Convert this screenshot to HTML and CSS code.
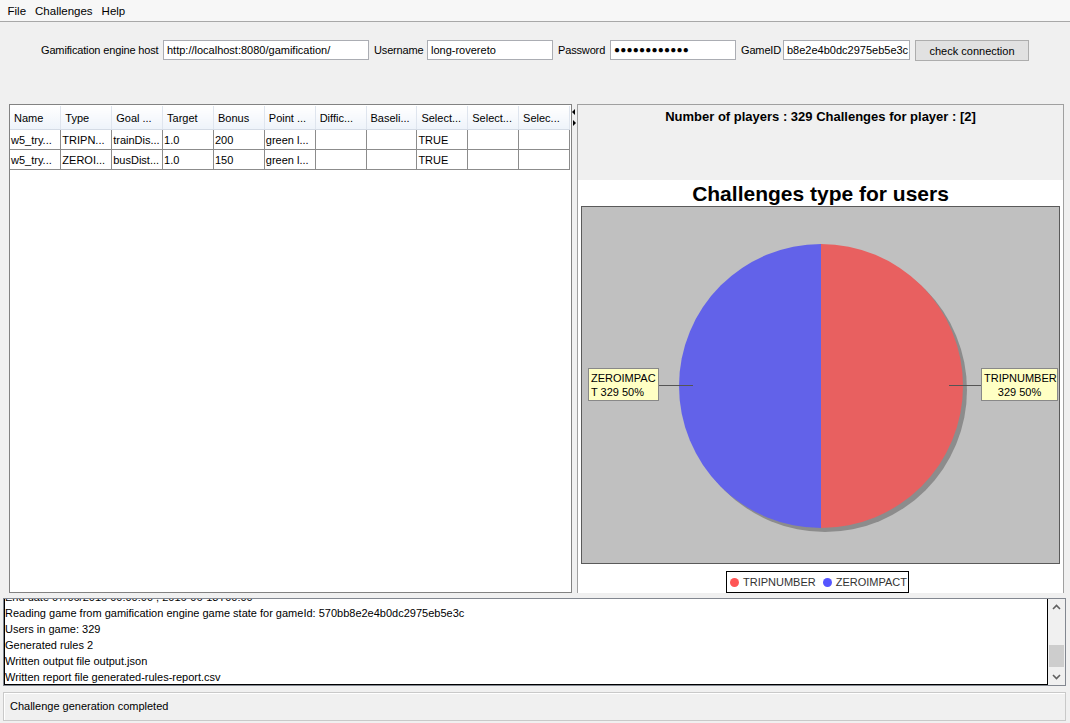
FILE: index.html
```html
<!DOCTYPE html>
<html>
<head>
<meta charset="utf-8">
<link rel="stylesheet" href="styles.css">
</head>
<body>
<div class="menubar">
  <span class="menu-item">File</span>
  <span class="menu-item">Challenges</span>
  <span class="menu-item">Help</span>
</div>

<div class="config">
  <span class="lbl lbl-host">Gamification engine host</span>
  <div class="field field-host">http://localhost:8080/gamification/</div>
  <span class="lbl lbl-user">Username</span>
  <div class="field field-sm">long-rovereto</div>
  <span class="lbl lbl-pass">Password</span>
  <div class="field field-sm field-pass">●●●●●●●●●●●●</div>
  <span class="lbl lbl-game">GameID</span>
  <div class="field field-game">b8e2e4b0dc2975eb5e3c</div>
  <button class="btn">check connection</button>
</div>

<div class="main">
  <div class="table-pane">
    <table class="grid">
      <thead>
        <tr>
          <th>Name</th><th>Type</th><th>Goal ...</th><th>Target</th><th>Bonus</th><th>Point ...</th><th>Diffic...</th><th>Baseli...</th><th>Select...</th><th>Select...</th><th>Selec...</th>
        </tr>
      </thead>
      <tbody>
        <tr>
          <td>w5_try...</td><td>TRIPN...</td><td>trainDis...</td><td>1.0</td><td>200</td><td>green l...</td><td></td><td></td><td>TRUE</td><td></td><td></td>
        </tr>
        <tr>
          <td>w5_try...</td><td>ZEROI...</td><td>busDist...</td><td>1.0</td><td>150</td><td>green l...</td><td></td><td></td><td>TRUE</td><td></td><td></td>
        </tr>
      </tbody>
    </table>
  </div>

  <div class="divider">
    <span class="arrow arrow-left"></span>
    <span class="arrow arrow-right"></span>
  </div>

  <div class="right-pane">
    <div class="stats">Number of players : 329 Challenges for player : [2]</div>
    <div class="chart">
      <div class="chart-title">Challenges type for users</div>
      <div class="plot">
        <svg class="pie" width="477" height="356" viewBox="0 0 477 356">
          <circle cx="243" cy="183" r="142" fill="#8c8c8c"/>
          <path d="M239 37 A142 142 0 0 1 239 321 Z" fill="#e86060"/>
          <path d="M239 321 A142 142 0 0 1 239 37 Z" fill="#6262e9"/>
          <line x1="77" y1="178.5" x2="111" y2="178.5" stroke="#555" stroke-width="1"/>
          <line x1="367" y1="178.5" x2="400" y2="178.5" stroke="#555" stroke-width="1"/>
        </svg>
        <div class="pie-label label-left">ZEROIMPAC<br>T 329 50%</div>
        <div class="pie-label label-right">TRIPNUMBER<br>329 50%</div>
      </div>
      <div class="legend-row">
        <div class="legend">
          <span class="dot dot-red"></span><span class="legend-text">TRIPNUMBER</span>
          <span class="dot dot-blue"></span><span class="legend-text">ZEROIMPACT</span>
        </div>
      </div>
    </div>
  </div>
</div>

<div class="log">
  <div class="log-text">
    <div class="log-lines">
      <div>End date 07/06/2016 00:00:00 , 2016-06-13T00:00</div>
      <div>Reading game from gamification engine game state for gameId: 570bb8e2e4b0dc2975eb5e3c</div>
      <div>Users in game: 329</div>
      <div>Generated rules 2</div>
      <div>Written output file output.json</div>
      <div>Written report file generated-rules-report.csv</div>
    </div>
  </div>
  <div class="scrollbar">
    <svg class="sb-arrow" width="17" height="17" viewBox="0 0 17 17"><path d="M5 10 L8.5 6.5 L12 10" fill="none" stroke="#606060" stroke-width="1.6"/></svg>
    <div class="sb-track"><div class="sb-thumb"></div></div>
    <svg class="sb-arrow" width="17" height="17" viewBox="0 0 17 17"><path d="M5 7 L8.5 10.5 L12 7" fill="none" stroke="#606060" stroke-width="1.6"/></svg>
  </div>
</div>

<div class="status">Challenge generation completed</div>
</body>
</html>
```

FILE: styles.css
```css
html, body {
  margin: 0;
  padding: 0;
}

body {
  width: 1070px;
  height: 723px;
  overflow: hidden;
  background: #f0f0f0;
  font-family: "Liberation Sans", Arial, sans-serif;
  font-size: 11px;
  color: #000;
}

/* menu */
.menubar {
  height: 21px;
  border-bottom: 1px solid #a8a8a8;
  background: #f7f7f7;
  display: flex;
  padding-left: 3px;
  font-size: 11.5px;
  line-height: 23px;
}

.menu-item {
  padding: 0 4.5px;
}

/* config */
.config {
  display: flex;
  gap: 5px;
  padding: 18px 0 0 41px;
  height: 64px;
  align-items: flex-start;
}

.lbl {
  white-space: nowrap;
  line-height: 20px;
  font-size: 11px;
  flex: 0 0 auto;
  min-width: 0;
  letter-spacing: -0.15px;
}

.lbl-host { width: 117px; }
.lbl-user { width: 48px; }
.lbl-pass { width: 47px; }
.lbl-game { width: 37px; }

.field {
  box-sizing: border-box;
  flex: 0 0 auto;
  height: 20px;
  border: 1px solid #abadb3;
  background: #fff;
  padding-left: 3px;
  line-height: 18px;
  white-space: nowrap;
  overflow: hidden;
}

.field-host { width: 206px; }
.field-sm { width: 126px; }
.field-game { width: 127px; }

.field-pass {
  font-size: 10px;
  letter-spacing: 0.2px;
}

.btn {
  box-sizing: border-box;
  flex: 0 0 auto;
  width: 114px;
  height: 21px;
  border: 1px solid #adadad;
  background: #e1e1e1;
  font-family: inherit;
  font-size: 11px;
  padding: 0;
  color: #000;
}

/* main split */
.main {
  display: flex;
  height: 489px;
  margin-left: 9px;
  width: 1055px;
}

.table-pane {
  box-sizing: border-box;
  width: 563px;
  height: 489px;
  border: 1px solid #828282;
  background: #fff;
  padding: 1px 1px 0 0;
}

.grid {
  table-layout: fixed;
  border-collapse: collapse;
  width: 560px;
}

.grid th {
  height: 23px;
  padding: 0 0 0 4px;
  text-align: left;
  font-weight: normal;
  background: linear-gradient(#ffffff, #eef3fa);
  border-right: 1px solid #dfe5ee;
  border-bottom: 1px solid #d4dbe5;
  white-space: nowrap;
  overflow: hidden;
}

.grid td {
  height: 19px;
  padding: 0 0 0 1px;
  border-right: 1px solid #8c8c8c;
  border-bottom: 1px solid #8c8c8c;
  white-space: nowrap;
  overflow: hidden;
}

.divider {
  width: 5px;
  position: relative;
}

.arrow {
  position: absolute;
  left: 0;
  width: 0;
  height: 0;
  border-top: 3px solid transparent;
  border-bottom: 3px solid transparent;
}

.arrow-left {
  top: 5px;
  left: 0;
  border-right: 3px solid #000;
}

.arrow-right {
  top: 16px;
  left: 1px;
  border-left: 3px solid #000;
}

.right-pane {
  flex: 1;
  display: flex;
  flex-direction: column;
  border-top: 1px solid #a0a0a0;
  border-left: 1px solid #a0a0a0;
  border-right: 1px solid #a0a0a0;
}

.stats {
  height: 75px;
  text-align: center;
  font-weight: bold;
  font-size: 13px;
  line-height: 24px;
  box-sizing: border-box;
}

.chart {
  flex: 1;
  background: #fff;
  display: flex;
  flex-direction: column;
  padding: 0 3px;
}

.chart-title {
  height: 26px;
  line-height: 28px;
  text-align: center;
  font-weight: bold;
  font-size: 21px;
}

.plot {
  position: relative;
  box-sizing: border-box;
  height: 358px;
  border: 1px solid #5a5a5a;
  background: #c0c0c0;
}

.pie {
  display: block;
}

.pie-label {
  position: absolute;
  top: 161px;
  box-sizing: border-box;
  height: 33px;
  border: 1px solid #888;
  background: #ffffc4;
  font-size: 11px;
  line-height: 14px;
  padding: 2px 2px 0 2px;
  white-space: nowrap;
}

.label-left {
  left: 6px;
  width: 71px;
}

.label-right {
  left: 399px;
  width: 77px;
  text-align: center;
}

.legend-row {
  display: flex;
  justify-content: center;
  padding-top: 7px;
  padding-right: 6px;
}

.legend {
  box-sizing: border-box;
  height: 22px;
  width: 183px;
  border: 1px solid #000;
  display: flex;
  align-items: center;
  padding-left: 3px;
  color: #333;
  font-size: 11px;
}

.dot {
  width: 9px;
  height: 9px;
  border-radius: 50%;
  margin-right: 4px;
}

.dot-red { background: #ff5555; }
.dot-blue { background: #5555ff; margin-left: 7px; }

/* log */
.log {
  box-sizing: border-box;
  margin: 5px 0 0 3px;
  width: 1063px;
  height: 88px;
  border: 1px solid #828790;
  display: flex;
}

.log-text {
  flex: 1;
  background: #fff;
  border-left: 1px solid #000;
  border-bottom: 1px solid #000;
  border-right: 1px solid #000;
  overflow: hidden;
}

.log-lines {
  margin-top: -10px;
  line-height: 16px;
  font-size: 11px;
  white-space: nowrap;
}

.scrollbar {
  width: 17px;
  display: flex;
  flex-direction: column;
  background: #f0f0f0;
}

.sb-arrow {
  display: block;
  flex: none;
}

.sb-track {
  flex: 1;
  position: relative;
}

.sb-thumb {
  position: absolute;
  left: 1px;
  right: 1px;
  top: 29px;
  height: 22px;
  background: #cdcdcd;
}

/* status */
.status {
  box-sizing: border-box;
  margin: 6px 0 0 3px;
  width: 1063px;
  height: 29px;
  border: 1px solid #c9c9c9;
  box-shadow: inset 1px 1px 0 #fff;
  padding-left: 6px;
  line-height: 27px;
  font-size: 11px;
}
```
